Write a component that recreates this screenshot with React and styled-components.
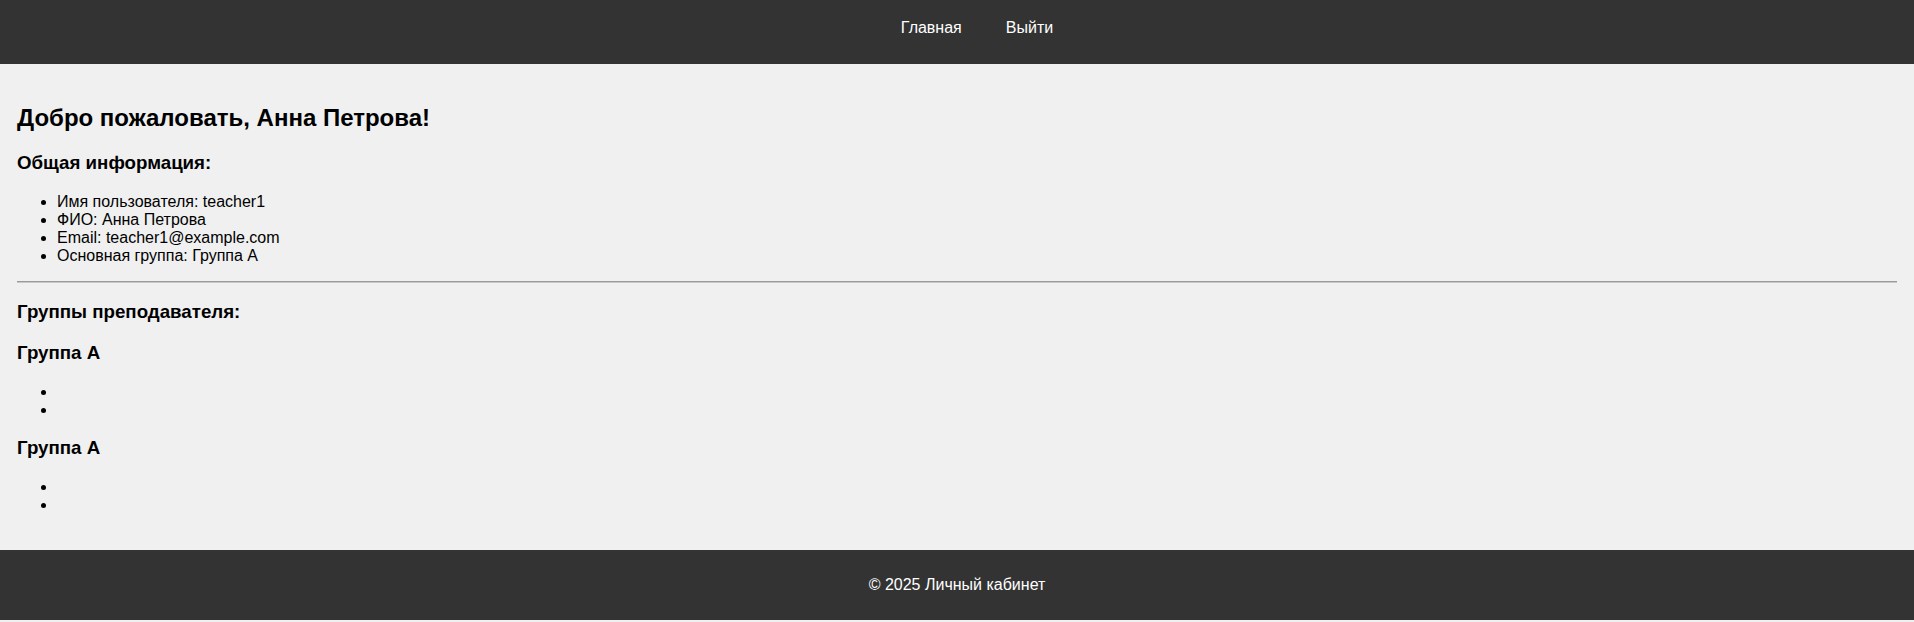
import React from 'react';
import styled, { createGlobalStyle } from 'styled-components';

const GlobalStyle = createGlobalStyle`
  body {
    margin: 0;
    background: #f0f0f0;
    font-family: "Liberation Sans", Arial, sans-serif;
    color: #000;
  }
`;

const Header = styled.header`
  height: 64px;
  box-sizing: border-box;
  padding-top: 19px;
  background: #333;
`;

const NavList = styled.ul`
  display: flex;
  justify-content: center;
  gap: 44px;
  margin: 0;
  padding: 0 0 0 40px;
  list-style: none;
  line-height: normal;
`;

const NavLink = styled.a`
  color: #fff;
  font-size: 16px;
  text-decoration: none;
  cursor: pointer;
`;

const Main = styled.main`
  padding: 20px 17px;
`;

const Title = styled.h2`
  font-size: 24px;
  margin: 19.92px 0;
`;

const Subtitle = styled.h3`
  font-size: 18.72px;
  margin: 18.72px 0;
`;

const InfoList = styled.ul`
  margin: 16px 0;
  padding-left: 40px;
  font-size: 16px;
`;

const Divider = styled.hr`
  margin: 8px 0;
  border: 0;
  border-top: 1px solid #9a9a9a;
  border-bottom: 1px solid #c8c8c8;
`;

const Footer = styled.footer`
  padding: 10px;
  background: #333;
  color: #fff;
  text-align: center;
`;

const FooterText = styled.p`
  margin: 16px 0;
  font-size: 16px;
`;

const user = {
  username: 'teacher1',
  fullName: 'Анна Петрова',
  email: 'teacher1@example.com',
  group: 'Группа А',
};

const groups = [
  { id: 1, name: 'Группа А', students: ['', ''] },
  { id: 2, name: 'Группа А', students: ['', ''] },
];

export default function App() {
  return (
    <>
      <GlobalStyle />
      <Header>
        <nav>
          <NavList>
            <li><NavLink>Главная</NavLink></li>
            <li><NavLink>Выйти</NavLink></li>
          </NavList>
        </nav>
      </Header>
      <Main>
        <Title>Добро пожаловать, {user.fullName}!</Title>
        <Subtitle>Общая информация:</Subtitle>
        <InfoList>
          <li>Имя пользователя: {user.username}</li>
          <li>ФИО: {user.fullName}</li>
          <li>Email: {user.email}</li>
          <li>Основная группа: {user.group}</li>
        </InfoList>
        <Divider />
        <Subtitle>Группы преподавателя:</Subtitle>
        {groups.map((g) => (
          <div key={g.id}>
            <Subtitle>{g.name}</Subtitle>
            <InfoList>
              {g.students.map((s, i) => (
                <li key={i}>{s}</li>
              ))}
            </InfoList>
          </div>
        ))}
      </Main>
      <Footer>
        <FooterText>© 2025 Личный кабинет</FooterText>
      </Footer>
    </>
  );
}
